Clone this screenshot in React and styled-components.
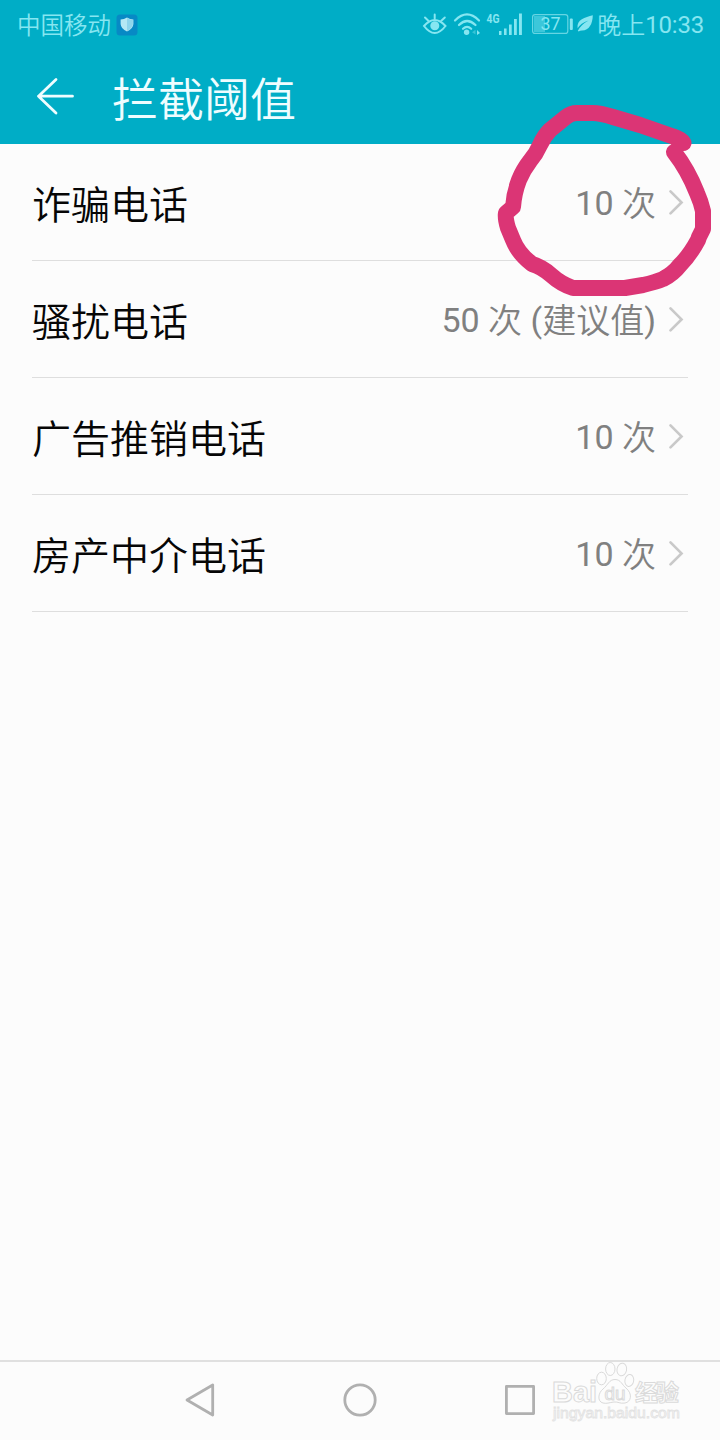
import React from "react";
import styled, { createGlobalStyle } from "styled-components";

const GlobalStyle = createGlobalStyle`
  * { box-sizing: border-box; }
  body { margin: 0; background: #fcfcfc; }
`;

const Screen = styled.div`
  position: relative;
  display: flex;
  flex-direction: column;
  width: 720px;
  height: 1440px;
  overflow: hidden;
  background: #fcfcfc;
  font-family: Roboto, "Noto Sans CJK SC", sans-serif;
`;

const Header = styled.header`
  height: 144px;
  background: #00adc6;
`;

const StatusBar = styled.div`
  display: flex;
  align-items: center;
  justify-content: space-between;
  height: 48px;
  padding: 0 16px 0 17px;
  color: #86e6f1;
  font-size: 23.5px;
  line-height: 48px;
  font-weight: 350;
`;

const StatusGroup = styled.div`
  display: flex;
  align-items: center;
  height: 48px;
  white-space: nowrap;
`;

const Carrier = styled.span`
  padding-top: 3px;
  margin-right: 5px;
`;

const Clock = styled.span`
  padding-top: 3px;
  font-size: 24px;
  width: 108px;
  text-align: right;
`;

const Latin = styled.span`
  font-weight: 400;
  line-height: 1;
  vertical-align: 1px;
  letter-spacing: ${(p) => p.$spacing || "normal"};
`;

const Icon = styled.svg`
  display: block;
  flex: none;
`;

const TitleBar = styled.div`
  display: flex;
  align-items: center;
  height: 96px;
  padding-left: 34px;
`;

const Title = styled.h1`
  margin: 7px 0 0 36px;
  color: #effdff;
  font-size: 46px;
  font-weight: 350;
  line-height: 60px;
`;

const List = styled.main`
  flex: 1;
  padding: 0 32px;
`;

const Row = styled.div`
  display: flex;
  align-items: center;
  height: 117px;
  border-bottom: 1px solid #dedede;
`;

const Label = styled.span`
  flex: 1;
  color: #060606;
  font-size: 39px;
  font-weight: 350;
  line-height: 56px;
  padding-top: 7px;
`;

const Value = styled.span`
  color: #808080;
  font-size: 34px;
  font-weight: 350;
  line-height: 50px;
  padding-top: 4px;
  margin-right: 12px;
`;

const NavBar = styled.nav`
  display: flex;
  align-items: center;
  justify-content: center;
  gap: 120px;
  height: 80px;
  padding-bottom: 2px;
  border-top: 2px solid #e0e0e0;
`;

const Marker = styled.svg`
  position: absolute;
  left: 490px;
  top: 90px;
  pointer-events: none;
`;

const Watermark = styled.svg`
  position: absolute;
  left: 545px;
  top: 1356px;
  pointer-events: none;
`;

const rows = [
  { label: "诈骗电话", count: 10 },
  { label: "骚扰电话", count: 50, note: "建议值" },
  { label: "广告推销电话", count: 10 },
  { label: "房产中介电话", count: 10 },
];

const ShieldBadge = () => (
  <Icon width="22" height="24" viewBox="0 -2 22 24">
    <rect x="0.5" y="0.5" width="21" height="21" rx="3.5" fill="#0789c5" />
    <path d="M11 3.5 Q14 5.5 17.4 5.6 V10 Q17 15 11 17.5 Q5 15 4.6 10 V5.6 Q8 5.5 11 3.5Z" fill="#b5e8f4" />
    <path d="M11 4 V17 Q16.4 14.5 16.9 10 V6 Q14 6 11 4Z" fill="#8fd5ec" />
  </Icon>
);

const StatusIcons = () => (
  <Icon width="176" height="48" viewBox="420 0 176 48">
    <g fill="none" stroke="#86e6f1" strokeWidth="2" strokeLinecap="round">
      <path d="M424 26 Q434.7 14 445.5 26 Q434.7 40 424 26Z" />
      <path d="M425 17.5 L428.3 20.7 M434.7 14.5 V18.5 M444.8 17.5 L441.3 20.7" />
      <path d="M455 20.5 Q467 8.5 479 20.5" strokeWidth="2.2" />
      <path d="M459 25 Q467 17 475.5 25" strokeWidth="2.2" />
      <path d="M463 28.8 Q467 25 471.2 28.8" strokeWidth="2.2" />
    </g>
    <g fill="#86e6f1">
      <circle cx="434.8" cy="25.7" r="4.5" />
      <circle cx="466.6" cy="32.3" r="2.7" />
      <path d="M475.5 29.8 V34.5 L472 32.2Z" opacity=".4" />
      <path d="M477 30 L480 33 L477 35Z" />
      <rect x="499" y="31" width="2.5" height="4" />
      <rect x="504" y="28.5" width="2.6" height="6.5" />
      <rect x="509" y="24.5" width="2.7" height="10.5" />
      <rect x="514" y="19" width="2.8" height="16" />
      <rect x="519" y="13.5" width="2.9" height="21.5" />
      <rect x="569.8" y="18.5" width="3" height="11.5" rx="1" />
      <path d="M592.8 15.2 C592.6 24 589 30.5 582 30.4 Q580 30.5 578.6 31.6 L577.8 30.8 Q581 24.5 588.5 20.4 Q580.5 23.2 577.6 28.2 C576.5 19 585 17.4 592.8 15.2Z" />
      <text x="486.5" y="22.8" fontFamily="Roboto, sans-serif" fontWeight="700" fontSize="13" textLength="13" lengthAdjust="spacingAndGlyphs">4G</text>
      <rect x="534" y="16" width="11" height="16" opacity=".45" />
      <text x="540.5" y="30.3" fontFamily="Roboto, sans-serif" fontWeight="400" fontSize="18.5" textLength="20" lengthAdjust="spacingAndGlyphs">37</text>
    </g>
    <rect x="532.6" y="14.6" width="35.2" height="18.8" rx="2.5" fill="none" stroke="#66d5e3" strokeWidth="1.2" />
  </Icon>
);

const BackArrow = () => (
  <Icon width="42" height="42" viewBox="34 75 42 42">
    <path d="M56 79.5 L38.5 96.2 L56 113 M38.5 96.2 H72.5" fill="none" stroke="#effdff" strokeWidth="2.8" strokeLinecap="round" strokeLinejoin="round" />
  </Icon>
);

const Chevron = () => (
  <Icon width="20" height="30" viewBox="0 0 20 30">
    <path d="M2.5 4.4 L13.5 15.4 L2.5 26.4" fill="none" stroke="#c9c9c9" strokeWidth="2.7" strokeLinecap="round" strokeLinejoin="miter" />
  </Icon>
);

const NavIcon = ({ children }) => (
  <Icon width="40" height="40" viewBox="0 0 40 40" fill="none" stroke="#b0b0b0" strokeWidth="2.8" strokeLinejoin="round">
    {children}
  </Icon>
);

const BaiduWatermark = () => (
  <Watermark width="150" height="74" viewBox="545 1356 150 74" fill="#fcfcfc" stroke="#dadada" strokeWidth="1">
    <text x="552" y="1401.5" fontFamily="Liberation Sans, sans-serif" fontWeight="700" fontSize="29" textLength="45" lengthAdjust="spacingAndGlyphs">Bai</text>
    <ellipse cx="601.5" cy="1378.5" rx="4.8" ry="6.3" />
    <ellipse cx="610.3" cy="1369" rx="4.7" ry="6.5" />
    <ellipse cx="621.8" cy="1369.5" rx="4.8" ry="6.3" transform="rotate(12 621.8 1369.5)" />
    <ellipse cx="629.3" cy="1380.5" rx="4.4" ry="6" transform="rotate(10 629.3 1380.5)" />
    <path d="M615 1379.5 C621 1379.5 622 1385 626 1388 C633 1394 631 1402 625 1403 C620 1404 618 1401.5 614 1402 C609 1402.5 607 1404 603 1403 C597 1401.5 598 1393 603 1389 C608 1385 609 1379.5 615 1379.5Z" />
    <text x="604.5" y="1400" fontFamily="Liberation Sans, sans-serif" fontSize="19" textLength="21" lengthAdjust="spacingAndGlyphs">du</text>
    <text x="635" y="1401" fontFamily="Noto Sans CJK SC, sans-serif" fontWeight="700" fontSize="23" textLength="44">经验</text>
    <text x="553" y="1418" fontFamily="Liberation Sans, sans-serif" fontSize="14.5" stroke="#e2e2e2" strokeWidth=".8" textLength="127" lengthAdjust="spacingAndGlyphs">jingyan.baidu.com</text>
  </Watermark>
);

const RedCircle = () => (
  <Marker width="230" height="220" viewBox="490 90 230 220">
    <path
      d="M683.5 143 Q681 139 673 136.5 L640 125 L613 117 Q600 113 593 113 H577 Q571 113 566 117 L550 130 Q544 136 540 145 Q536 154 530 161 Q523 170 519 180 Q514 193 513 207 L506 213 Q505 218 508 228 L513 240 Q518 253 532 264 Q542 267 551 275 Q561 284 573 288 H625 L643 285 Q656 282 663 279 Q673 274 680 265 Q690 255 698 240 L699 237 L703 229 V211 Q701 202 697 193 Q688 170 674 152"
      fill="none"
      stroke="#db3575"
      strokeWidth="16"
      strokeLinecap="round"
      strokeLinejoin="round"
    />
  </Marker>
);

export default function App() {
  return (
    <>
      <GlobalStyle />
      <Screen>
        <Header>
          <StatusBar>
            <StatusGroup>
              <Carrier>中国移动</Carrier>
              <ShieldBadge />
            </StatusGroup>
            <StatusGroup>
              <StatusIcons />
              <Clock>
                晚上<Latin $spacing="-0.2px">10:33</Latin>
              </Clock>
            </StatusGroup>
          </StatusBar>
          <TitleBar>
            <BackArrow />
            <Title>拦截阈值</Title>
          </TitleBar>
        </Header>
        <List>
          {rows.map(({ label, count, note }) => (
            <Row key={label}>
              <Label>{label}</Label>
              <Value>
                <Latin>{count} </Latin>次
                {note && (
                  <>
                    <Latin> (</Latin>
                    {note}
                    <Latin>)</Latin>
                  </>
                )}
              </Value>
              <Chevron />
            </Row>
          ))}
        </List>
        <NavBar>
          <NavIcon>
            <path d="M32.7 5 V35 L7 20Z" />
          </NavIcon>
          <NavIcon>
            <circle cx="20" cy="20" r="15.2" />
          </NavIcon>
          <NavIcon>
            <rect x="6.4" y="6.4" width="27.2" height="27.2" />
          </NavIcon>
        </NavBar>
        <BaiduWatermark />
        <RedCircle />
      </Screen>
    </>
  );
}
